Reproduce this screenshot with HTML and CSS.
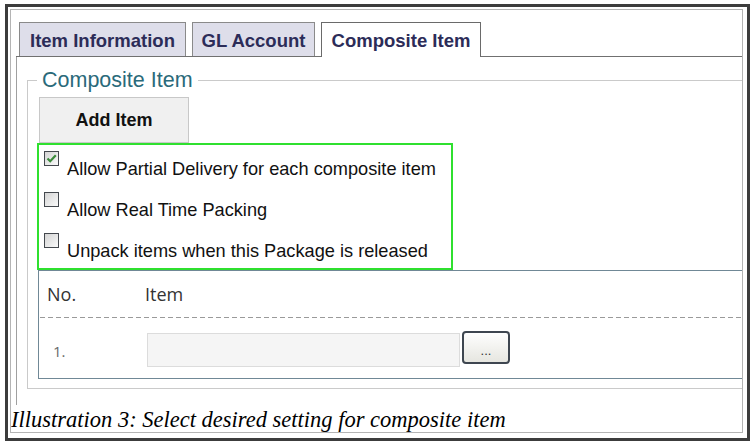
FILE: index.html
```html
<!DOCTYPE html>
<html>
<head>
    <title>Composite Item</title>
    <link rel="stylesheet" href="styles.css">
</head>
<body>
    <div class="frame">
        <div class="doc">
            <div class="shot">
                <div class="tabs">
                    <div class="tab tab-info">Item Information</div>
                    <div class="tab tab-gl">GL Account</div>
                    <div class="tab tab-active">Composite Item</div>
                </div>

                <div class="panel">
                    <fieldset class="group">
                        <legend>Composite Item</legend>

                        <button class="add-btn">Add Item</button>

                        <div class="options">
                            <label class="opt">
                                <span class="cb checked">
                                    <svg width="13" height="13" viewBox="0 0 13 13"><path d="M2.5 6.5 L5.2 9.2 L10.8 3.2" fill="none" stroke="#3b8a3b" stroke-width="2.2"/></svg>
                                </span>
                                <span class="opt-text">Allow Partial Delivery for each composite item</span>
                            </label>
                            <label class="opt">
                                <span class="cb"></span>
                                <span class="opt-text">Allow Real Time Packing</span>
                            </label>
                            <label class="opt">
                                <span class="cb"></span>
                                <span class="opt-text">Unpack items when this Package is released</span>
                            </label>
                        </div>

                        <div class="items">
                            <div class="items-head">
                                <div class="col-no">No.</div>
                                <div class="col-item">Item</div>
                            </div>
                            <div class="items-row">
                                <div class="col-no row-no">1.</div>
                                <input type="text" class="item-input">
                                <button class="pick-btn">...</button>
                            </div>
                        </div>
                    </fieldset>
                </div>
            </div>

            <div class="caption">Illustration 3: Select desired setting for composite item</div>
        </div>
    </div>
</body>
</html>
```

FILE: styles.css
```css
body {
    margin: 0;
    background-color: white;
    font-family: "Liberation Sans", Arial, sans-serif;
}
.frame {
    margin: 4px 0 0 5px;
    width: 745px;
    height: 437px;
    border: 3px solid #3c3c3c;
    box-sizing: border-box;
    padding: 2px 0 0 2px;
}
.doc {
    width: 733px;
    height: 424px;
    border: 1px solid #b4b4b4;
    box-sizing: border-box;
    display: flex;
    flex-direction: column;
    overflow: hidden;
}
.shot {
    flex: 1;
    padding: 12px 0 0 5px;
    display: flex;
    flex-direction: column;
}
.tabs {
    display: flex;
    gap: 6px;
    padding-left: 3px;
    height: 34px;
    border-bottom: 1px solid #707070;
    margin-right: -20px;
}
.tab {
    height: 34px;
    box-sizing: border-box;
    border: 1px solid #8a8a8a;
    border-bottom: none;
    background-color: #dedeea;
    color: #2c2c58;
    font-size: 18.5px;
    font-weight: bold;
    padding-top: 2px;
    line-height: 31px;
    text-align: center;
    white-space: nowrap;
}
.tab-info {
    width: 167px;
}
.tab-gl {
    width: 123px;
}
.tab-active {
    width: 160px;
    height: 35px;
    margin-bottom: -1px;
    background-color: white;
    border-color: #6a6a6a;
}
.panel {
    flex: 1;
    border-left: 1px solid #a0a0a0;
    padding: 11px 0 0 10px;
}
.group {
    margin: 0 -30px 0 0;
    padding: 5px 0 9px 9px;
    border: 1px solid #cacaca;
}
.group legend {
    padding: 0 5px;
    font-size: 21.5px;
    line-height: 24px;
    color: #2a6a7a;
}
.add-btn {
    display: block;
    margin-left: 2px;
    width: 150px;
    height: 46px;
    border: 1px solid #c8c8c8;
    background-color: #f0f0f0;
    font-family: "Liberation Sans", Arial, sans-serif;
    font-size: 18px;
    font-weight: bold;
    color: #111;
    padding: 0;
}
.options {
    width: 416px;
    height: 127px;
    box-sizing: border-box;
    border: 2px solid #2fe02f;
    padding: 6px 0 0 5px;
}
.opt {
    display: flex;
    align-items: flex-start;
    height: 41px;
}
.cb {
    width: 15px;
    height: 15px;
    box-sizing: border-box;
    border: 1px solid #44484e;
    background: linear-gradient(135deg, #d4d4d4, #fafafa);
    display: flex;
    align-items: center;
    justify-content: center;
}
.opt-text {
    margin: 8px 0 0 8px;
    font-size: 18.2px;
    line-height: 20px;
    color: #111;
}
.items {
    margin-left: 1px;
    border: 1px solid #708896;
    font-family: "Open Sans", sans-serif;
}
.items-head {
    display: flex;
    height: 47px;
    box-sizing: border-box;
    padding: 11px 0 0 8px;
    font-size: 18px;
    line-height: 24px;
    color: #333;
    background-image: linear-gradient(to right, #9a9a9a 5px, transparent 5px);
    background-size: 8px 1px;
    background-repeat: repeat-x;
    background-position: 1px 100%;
    margin-bottom: 1px;
}
.col-no {
    width: 98px;
}
.items-row {
    display: flex;
    align-items: flex-start;
    height: 59px;
    padding-left: 14px;
}
.row-no {
    width: 94px;
    margin-top: 22px;
    font-size: 15px;
    line-height: 20px;
    color: #6a6a6a;
}
.item-input {
    margin-top: 14px;
    width: 313px;
    height: 34px;
    box-sizing: border-box;
    border: 1px solid #dcdcdc;
    background-color: #f5f5f5;
}
.pick-btn {
    margin: 12px 0 0 2px;
    width: 48px;
    height: 33px;
    box-sizing: border-box;
    border: 2px solid #3e4650;
    border-radius: 4px;
    background: linear-gradient(#fefefe, #e6e6e0);
    font-size: 13px;
    color: #333;
    padding: 6px 0 0 0;
}
.caption {
    height: 27px;
    padding: 3px 0 0 0;
    box-sizing: border-box;
    font-family: "Liberation Serif", "Times New Roman", serif;
    font-style: italic;
    font-size: 22.5px;
    line-height: 24px;
    color: #000;
    white-space: nowrap;
}
```
